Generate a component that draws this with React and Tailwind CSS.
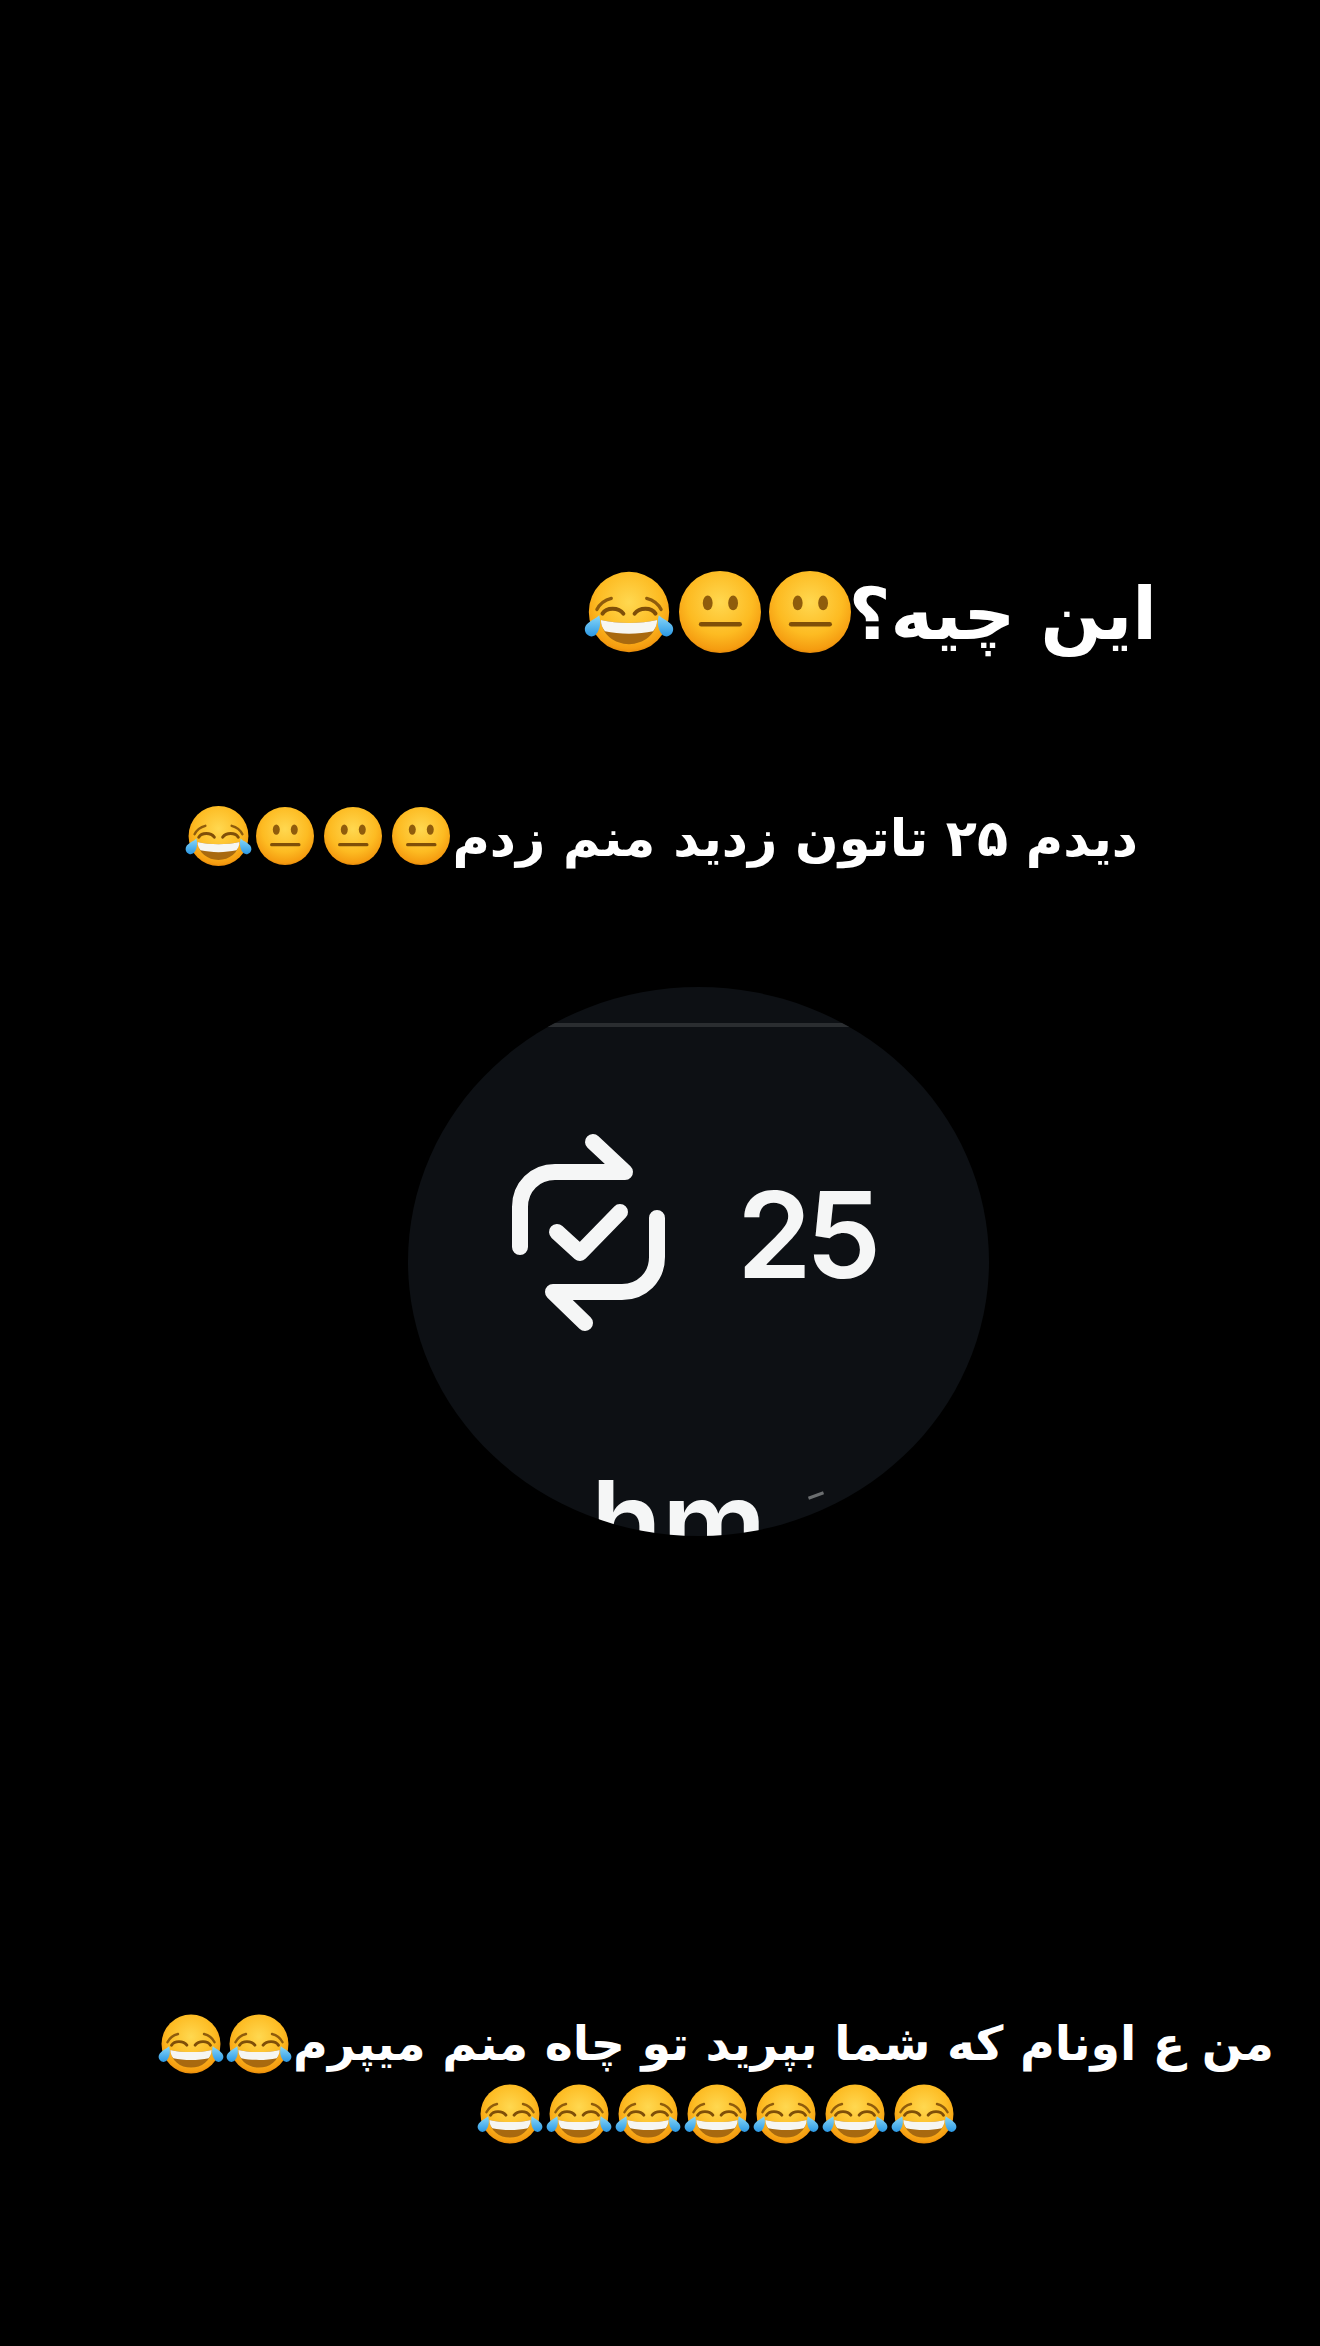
import React, { useId } from "react";

const Face = ({ id }) => (
  <>
    <defs>
      <radialGradient id={id} cx="50%" cy="38%" r="66%">
        <stop offset="0%" stopColor="#ffd850" />
        <stop offset="60%" stopColor="#fdbb22" />
        <stop offset="88%" stopColor="#f59c10" />
        <stop offset="100%" stopColor="#d97a04" />
      </radialGradient>
    </defs>
    <circle cx="50" cy="50" r="50" fill={`url(#${id})`} />
  </>
);

const Neutral = ({ className }) => {
  const id = useId();
  return (
    <svg viewBox="0 0 100 100" className={`inline-block align-middle ${className}`}>
      <Face id={id} />
      <ellipse cx="35" cy="39" rx="6" ry="9" fill="#8f5c0c" />
      <ellipse cx="66" cy="39" rx="6" ry="9" fill="#8f5c0c" />
      <path d="M27 65H74" stroke="#7f4f08" strokeWidth="5.5" strokeLinecap="round" fill="none" />
    </svg>
  );
};

const Laugh = ({ className }) => {
  const id = useId();
  return (
    <svg viewBox="-6 0 112 100" className={`inline-block align-middle ${className}`}>
      <Face id={id} />
      <defs>
        <linearGradient id={`${id}b`} x1="0" y1="0" x2="0" y2="1">
          <stop offset="0%" stopColor="#8ad8f8" />
          <stop offset="100%" stopColor="#2b98e4" />
        </linearGradient>
      </defs>
      <path d="M10 47C14 39 20 35 28 33M90 47C86 39 80 35 72 33" stroke="#8f5c0c" strokeWidth="4" strokeLinecap="round" fill="none" />
      <path d="M17 52C22 44 37 44 43 52M57 52C63 44 78 44 83 52" stroke="#7f4f08" strokeWidth="5" strokeLinecap="round" fill="none" />
      <path d="M15 60C35 65 65 65 85 60C84 78 68 90 50 90C32 90 16 78 15 60Z" fill="#a8690f" />
      <path d="M15 60C35 65 65 65 85 60C85 66 83 70 80 74C62 78 38 78 20 74C17 70 15 66 15 60Z" fill="#f6f6f2" />
      <path d="M13 54C15 62 15 72 8 79C0 84 -9 74 -3 66C2 60 8 59 13 54Z" fill={`url(#${id}b)`} />
      <path d="M87 54C85 62 85 72 92 79C100 84 109 74 103 66C98 60 92 59 87 54Z" fill={`url(#${id}b)`} />
    </svg>
  );
};

export default function App() {
  const rowEmojis = [1, 2, 3, 4, 5, 6, 7];

  return (
    <div className="min-h-[2346px] bg-black text-white font-['DejaVu_Sans',sans-serif] font-bold flex flex-col">
      <p dir="rtl" className="mt-[564px] mr-[163px] h-[100px] text-[72px] leading-[100px] whitespace-nowrap">
        این چیه؟
        <Neutral className="w-[82px] h-[82px] -mr-[2px] -translate-y-[7px]" />
        <Neutral className="w-[82px] h-[82px] mr-[8px] -translate-y-[7px]" />
        <Laugh className="w-[90px] h-[82px] mr-[5px] -translate-y-[7px]" />
      </p>

      <p dir="rtl" className="mt-[135px] mr-[182px] h-[80px] text-[51px] leading-[80px] whitespace-nowrap">
        دیدم ۲۵ تاتون زدید منم زدم
        <Neutral className="w-[58px] h-[58px] mr-[2px] -translate-y-[6px]" />
        <Neutral className="w-[58px] h-[58px] mr-[10px] -translate-y-[6px]" />
        <Neutral className="w-[58px] h-[58px] mr-[10px] -translate-y-[6px]" />
        <Laugh className="w-[67px] h-[60px] mr-[4px] -translate-y-[6px]" />
      </p>

      {/* zoomed crop of the repost counter */}
      <div className="mt-[108px] ml-[408px] w-[581px] h-[549px] shrink-0 rounded-[50%] bg-[#0d1014] overflow-hidden flex flex-col">
        <div className="mt-[36px] h-[4px] shrink-0 bg-[#2a2d30]" />
        <div className="mt-[103px] ml-[97px] h-[210px] shrink-0 flex items-center gap-[62px] text-[#f5f6f6]">
          <svg
            viewBox="0 0 170 210"
            className="w-[170px] h-[210px] shrink-0"
            fill="none"
            stroke="currentColor"
            strokeWidth="16"
            strokeLinecap="round"
            strokeLinejoin="round"
          >
            <path d="M88 12L120 42H50C30 42 15 57 15 77V117" />
            <path d="M152 88V127C152 147 137 162 117 162H48L80 193" />
            <path d="M52 102L75 123L115 82" />
          </svg>
          <span className="font-['Inter',sans-serif] font-semibold text-[120px] leading-none tracking-[-6px]">25</span>
        </div>
        <div className="mt-[124px] ml-[183px] shrink-0 flex text-[#f5f6f6]">
          <span className="font-['Inter',sans-serif] font-semibold text-[116px] leading-none">hm</span>
          <div className="ml-[42px] mt-[30px] w-[16px] h-[3px] -rotate-[20deg] bg-[#6b6e70]" />
        </div>
      </div>

      <div className="mt-[473px] ml-[160px] w-[1114px] text-center text-[47.5px] leading-[70px]">
        <p dir="rtl" className="whitespace-nowrap">
          من ع اونام که شما بپرید تو چاه منم میپرم
          <Laugh className="w-[66px] h-[60px] mr-[1px] -translate-y-[3px]" />
          <Laugh className="w-[66px] h-[60px] mr-[2px] -translate-y-[3px]" />
        </p>
        <p className="flex justify-center gap-[3px] h-[70px] items-center">
          {rowEmojis.map((n) => (
            <Laugh key={n} className="w-[66px] h-[60px]" />
          ))}
        </p>
      </div>
    </div>
  );
}
